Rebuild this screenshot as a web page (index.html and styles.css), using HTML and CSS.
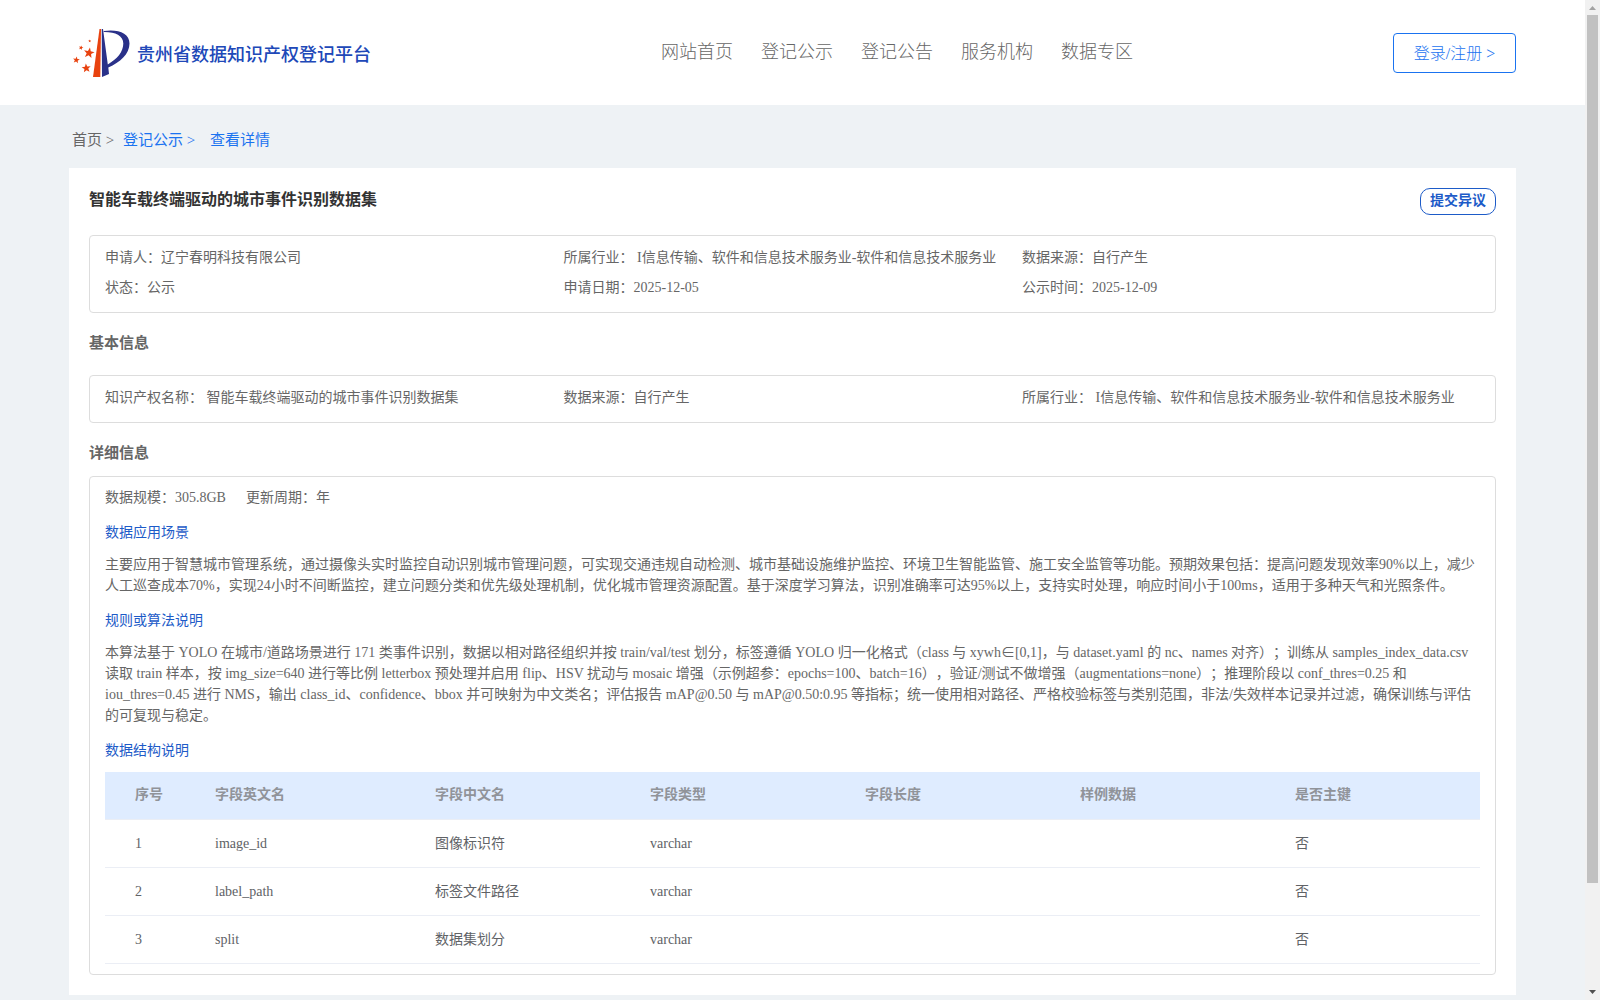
FILE: index.html
```html
<!DOCTYPE html>
<html lang="zh-CN">
<head>
<meta charset="utf-8">
<title>贵州省数据知识产权登记平台</title>
<link rel="stylesheet" href="styles.css">
</head>
<body>
<div class="page">
  <header class="header">
    <div class="brand">
      <svg class="logo" viewBox="0 0 58 50" width="58" height="50">
        <defs><path id="star" d="M0-1L.25-.34.95-.31.4.13.59.81 0 .42-.59.81-.4.13-.95-.31-.25-.34z"/></defs>
        <path fill="#e8420f" d="M27.500 1H29L28.300 49H21z"/>
        <path fill="#2a3189" d="M29.700 1H31L35.800 36.500C45 31 51.300 24 51.300 15.500 51.300 7.500 43 3.800 31.800 4V3C46 1 57.500 5 57.500 15.500 57.500 26 48 34.500 36.300 39.500L37 46 30 49z"/>
        <g fill="#e8420f">
          <use href="#star" transform="translate(17 25) rotate(10) scale(5.600)"/>
          <use href="#star" transform="translate(4.300 32) rotate(8) scale(3.600)"/>
          <use href="#star" transform="translate(14.300 40.200) rotate(-6) scale(4.800)"/>
          <use href="#star" transform="translate(9 19.700) rotate(15) scale(2.400)"/>
          <use href="#star" transform="translate(17.700 13) scale(1.600)"/>
        </g>
      </svg>
      <span class="brand-name">贵州省数据知识产权登记平台</span>
    </div>
    <nav class="nav">
      <a>网站首页</a><a>登记公示</a><a>登记公告</a><a>服务机构</a><a>数据专区</a>
    </nav>
    <a class="login">登录/注册 &gt;</a>
  </header>

  <main class="content">
    <div class="crumbs"><span class="crumb-home">首页 &gt;</span><span class="crumb-list">登记公示 &gt;</span><span>查看详情</span></div>

    <section class="card">
      <div class="title-row">
        <h1>智能车载终端驱动的城市事件识别数据集</h1>
        <a class="objection">提交异议</a>
      </div>

      <div class="box summary">
        <span>申请人：辽宁春明科技有限公司</span>
        <span>所属行业： I信息传输、软件和信息技术服务业-软件和信息技术服务业</span>
        <span>数据来源：自行产生</span>
        <span>状态：公示</span>
        <span>申请日期：2025-12-05</span>
        <span>公示时间：2025-12-09</span>
      </div>

      <h2 class="basic-title">基本信息</h2>
      <div class="box basic">
        <span>知识产权名称： 智能车载终端驱动的城市事件识别数据集</span>
        <span>数据来源：自行产生</span>
        <span>所属行业： I信息传输、软件和信息技术服务业-软件和信息技术服务业</span>
      </div>

      <h2 class="detail-title">详细信息</h2>
      <div class="box detail">
        <div class="scale"><span>数据规模：305.8GB</span><span>更新周期：年</span></div>
        <h3>数据应用场景</h3>
        <p>主要应用于智慧城市管理系统，通过摄像头实时监控自动识别城市管理问题，可实现交通违规自动检测、城市基础设施维护监控、环境卫生智能监管、施工安全监管等功能。预期效果包括：提高问题发现效率90%以上，减少<br>人工巡查成本70%，实现24小时不间断监控，建立问题分类和优先级处理机制，优化城市管理资源配置。基于深度学习算法，识别准确率可达95%以上，支持实时处理，响应时间小于100ms，适用于多种天气和光照条件。</p>
        <h3>规则或算法说明</h3>
        <p>本算法基于 YOLO 在城市/道路场景进行 171 类事件识别，数据以相对路径组织并按 train/val/test 划分，标签遵循 YOLO 归一化格式（class 与 xywh∈[0,1]，与 dataset.yaml 的 nc、names 对齐）；训练从 samples_index_data.csv<br>读取 train 样本，按 img_size=640 进行等比例 letterbox 预处理并启用 flip、HSV 扰动与 mosaic 增强（示例超参：epochs=100、batch=16），验证/测试不做增强（augmentations=none）；推理阶段以 conf_thres=0.25 和<br>iou_thres=0.45 进行 NMS，输出 class_id、confidence、bbox 并可映射为中文类名；评估报告 mAP@0.50 与 mAP@0.50:0.95 等指标；统一使用相对路径、严格校验标签与类别范围，非法/失效样本记录并过滤，确保训练与评估<br>的可复现与稳定。</p>
        <h3>数据结构说明</h3>
        <div class="table">
          <div class="row head"><span>序号</span><span>字段英文名</span><span>字段中文名</span><span>字段类型</span><span>字段长度</span><span>样例数据</span><span>是否主键</span></div>
          <div class="row"><span>1</span><span>image_id</span><span>图像标识符</span><span>varchar</span><span></span><span></span><span>否</span></div>
          <div class="row"><span>2</span><span>label_path</span><span>标签文件路径</span><span>varchar</span><span></span><span></span><span>否</span></div>
          <div class="row"><span>3</span><span>split</span><span>数据集划分</span><span>varchar</span><span></span><span></span><span>否</span></div>
        </div>
      </div>
    </section>
  </main>
</div>
<div class="scrollbar"><i class="arrow up"></i><i class="thumb"></i><i class="arrow down"></i></div>
</body>
</html>
```
FILE: styles.css
```css
* { box-sizing: border-box; }
body {
  margin: 0;
  height: 1000px;
  display: flex;
  overflow: hidden;
  background: #eef2f5;
  color: #666;
  font: 14px/21px "Liberation Serif", "Noto Sans CJK SC", serif;
  text-spacing-trim: space-all;
  white-space: nowrap;
}
h1, h2, h3, p { margin: 0; }
.page { flex: 1; min-width: 0; }

.header {
  height: 105px;
  padding: 0 69px 0 72px;
  background: #fff;
  display: grid;
  grid-template-columns: 589px 1fr auto;
}
.brand { display: flex; gap: 7px; padding-top: 28px; }
.logo { display: block; flex: none; }
.brand-name { font-size: 18px; line-height: 54px; font-weight: 500; color: #2048b8; }
.nav { display: flex; gap: 28px; font-size: 18px; font-weight: 300; line-height: 30px; padding-top: 37px; }
.login {
  width: 123px;
  height: 40px;
  margin-top: 33px;
  border: 1px solid #1a73f0;
  border-radius: 4px;
  color: #1a73f0;
  font-size: 16px;
  font-weight: 300;
  line-height: 39px;
  text-align: center;
}

.content { padding: 0 69px; }
.crumbs { display: flex; height: 63px; padding: 24px 0 0 3px; font-size: 15px; line-height: 23px; color: #1a73f0; }
.crumb-home { width: 51px; color: #666; }
.crumb-list { width: 87px; }

.card { height: 827px; padding: 20px 20px 0; background: #fff; }
.title-row { display: flex; justify-content: space-between; height: 47px; }
h1 { font-size: 16px; line-height: 24px; color: #333; }
.objection {
  width: 76px;
  height: 27px;
  border: 1px solid #1d5bc8;
  border-radius: 10px;
  color: #1d5bc8;
  font-weight: bold;
  line-height: 24px;
  text-align: center;
}
.box { border: 1px solid #ddd; border-radius: 4px; padding: 0 15px; }
.summary, .basic { display: grid; grid-template-columns: 458.5px 458.5px 1fr; line-height: 30px; }
.summary { height: 78px; padding-top: 7px; grid-auto-rows: 30px; }
.basic { height: 48px; padding-top: 7px; }
h2 { font-size: 15px; line-height: 22px; }
.basic-title { padding: 19px 0 21px; }
.detail-title { padding: 19px 0 12px; }
.detail { height: 499px; padding-top: 10px; }
.scale { display: flex; gap: 20px; }
h3 { font-size: 14px; font-weight: normal; line-height: 21px; color: #1d5bc8; margin: 14px 0 11px; }

.row {
  display: grid;
  grid-template-columns: 80px 220px 215px 215px 215px 215px 1fr;
  height: 48px;
  padding-left: 30px;
  line-height: 48px;
  color: #606266;
  border-bottom: 1px solid #ebeef5;
}
.head { background: #dfecff; color: #909399; font-weight: bold; line-height: 46px; }

.scrollbar { width: 15px; background: #f1f1f1; display: flex; flex-direction: column; align-items: center; }
.arrow { width: 7px; height: 4px; background: #505050; }
.up { margin: 6px 0 5px; background: #a3a3a3; clip-path: polygon(50% 0, 100% 100%, 0 100%); }
.down { margin-top: 107px; clip-path: polygon(0 0, 100% 0, 50% 100%); }
.thumb { width: 11px; height: 868px; background: #c1c1c1; }
```
